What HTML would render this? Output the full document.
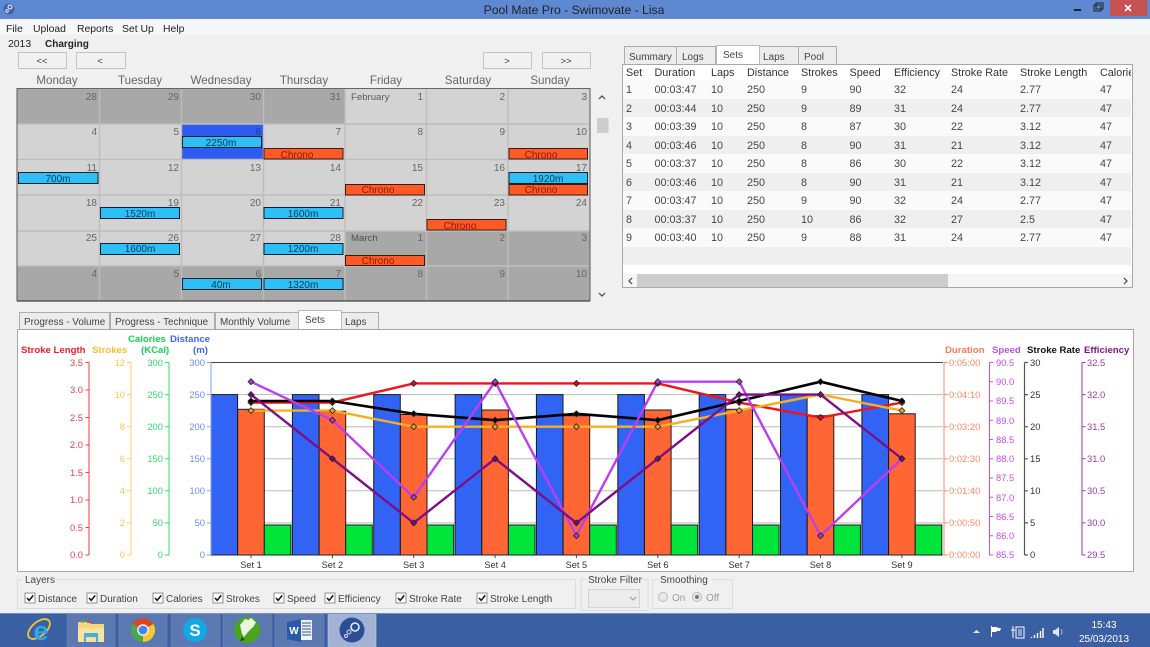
<!DOCTYPE html>
<html><head><meta charset="utf-8"><title>Pool Mate Pro</title>
<style>
html,body{margin:0;padding:0;background:#f0f0f0}
#w{position:relative;width:1150px;height:647px;overflow:hidden;background:#f0f0f0;font-family:"Liberation Sans",sans-serif;filter:blur(.35px)}
svg{position:absolute;left:0;top:0}
text{font-family:"Liberation Sans",sans-serif}
#t{position:absolute;left:623px;top:65px;width:508px;height:209px;overflow:hidden;background:#fff}
#t table{border-collapse:collapse;table-layout:fixed;width:509px;font-size:10.8px;color:#454545}
#t td,#t th{padding:2px 0 0 3px;font-weight:normal;text-align:left;white-space:nowrap;overflow:hidden;height:16.5px;line-height:16.5px}
#t th{height:13px;line-height:13px;color:#333}
#t tr:nth-child(odd) td{background:#fafafa}
#t tr:nth-child(even) td{background:#efefef}
</style></head><body><div id="w">
<svg width="1150" height="647" viewBox="0 0 1150 647">
<defs>
<polygon id="d" points="0,-3 3,0 0,3 -3,0" stroke="#222" stroke-width=".8"/>
<g id="c"><rect x="0" y="0" width="10" height="10" fill="#fff" stroke="#777" stroke-width=".8"/><path d="M2 5l2.2 2.4L8.2 2.4" fill="none" stroke="#111" stroke-width="1.5"/></g>
</defs>

<!-- title -->
<rect width="1150" height="19" fill="#5f88d3"/>
<circle cx="9" cy="9" r="5.5" fill="#3e63ab"/><circle cx="10" cy="7" r="2" fill="none" stroke="#fff" stroke-width="1"/><circle cx="7" cy="11" r="1.3" fill="none" stroke="#fff" stroke-width=".8"/>
<text x="574" y="14" font-size="12.2" fill="#222" text-anchor="middle">Pool Mate Pro - Swimovate - Lisa</text>
<rect x="1074" y="9" width="7" height="2" fill="#222"/>
<rect x="1094" y="5" width="7" height="6" fill="none" stroke="#222"/><rect x="1096" y="3" width="7" height="6" fill="none" stroke="#222"/>
<rect x="1110" y="0" width="37" height="16" fill="#c75050"/>
<path d="M1125 5l6 6M1131 5l-6 6" stroke="#fff" stroke-width="1.6"/>

<!-- menu -->
<rect y="19" width="1150" height="15" fill="#f6f7f8"/>
<g font-size="10.4" fill="#222">
<text x="6" y="32">File</text><text x="33" y="32">Upload</text><text x="77" y="32">Reports</text><text x="122" y="32">Set Up</text><text x="163" y="32">Help</text>
<text x="8" y="47">2013</text><text x="45" y="47" font-weight="bold" font-size="10">Charging</text>
</g>

<!-- nav buttons -->
<g fill="#f1f1f1" stroke="#c4c4c4">
<rect x="18.5" y="52.5" width="48" height="16"/><rect x="76.5" y="52.5" width="49" height="16"/>
<rect x="483.5" y="52.5" width="48" height="16"/><rect x="542.5" y="52.5" width="48" height="16"/>
</g>
<g font-size="9.5" fill="#333" text-anchor="middle">
<text x="42" y="64">&lt;&lt;</text><text x="100" y="64">&lt;</text><text x="507" y="64">&gt;</text><text x="566" y="64">&gt;&gt;</text>
</g>
<g font-size="11.6" fill="#666" text-anchor="middle">
<text x="57" y="84">Monday</text><text x="140" y="84">Tuesday</text><text x="221" y="84">Wednesday</text><text x="304" y="84">Thursday</text><text x="386" y="84">Friday</text><text x="468" y="84">Saturday</text><text x="550" y="84">Sunday</text>
</g>

<!-- calendar -->
<rect x="17" y="88" width="573" height="213" fill="#d3d3d3"/>
<rect x="17" y="88" width="328" height="36" fill="#a8a8a8"/>
<rect x="345" y="231" width="245" height="35" fill="#a8a8a8"/>
<rect x="17" y="266" width="573" height="35" fill="#a8a8a8"/>
<rect x="181.5" y="124" width="82" height="35.5" fill="#2e5cf2"/>
<g stroke="#bdbdbd" stroke-width="1.4">
<path d="M99.5 88V301M181.5 88V301M263.5 88V301M345 88V301M426.5 88V301M508 88V301"/>
<path d="M17 124H590M17 159.5H590M17 195H590M17 231H590M17 266H590"/>
</g>
<path d="M17 301V88.5H590V301" fill="none" stroke="#666" stroke-width="1.1"/>
<path d="M17 301H590" stroke="#444" stroke-width="1.3"/>

<g font-size="10" fill="#666" text-anchor="end">
<text x="97" y="100">28</text><text x="179" y="100">29</text><text x="261" y="100">30</text><text x="341" y="100">31</text><text x="423" y="100">1</text><text x="505" y="100">2</text><text x="587" y="100">3</text>
<text x="97" y="135">4</text><text x="179" y="135">5</text><text x="261" y="135" fill="#1d3fa8">6</text><text x="341" y="135">7</text><text x="423" y="135">8</text><text x="505" y="135">9</text><text x="587" y="135">10</text>
<text x="97" y="171">11</text><text x="179" y="171">12</text><text x="261" y="171">13</text><text x="341" y="171">14</text><text x="423" y="171">15</text><text x="505" y="171">16</text><text x="587" y="171">17</text>
<text x="97" y="206">18</text><text x="179" y="206">19</text><text x="261" y="206">20</text><text x="341" y="206">21</text><text x="423" y="206">22</text><text x="505" y="206">23</text><text x="587" y="206">24</text>
<text x="97" y="241">25</text><text x="179" y="241">26</text><text x="261" y="241">27</text><text x="341" y="241">28</text><text x="423" y="241">1</text><text x="505" y="241">2</text><text x="587" y="241">3</text>
<text x="97" y="277">4</text><text x="179" y="277">5</text><text x="261" y="277">6</text><text x="341" y="277">7</text><text x="423" y="277">8</text><text x="505" y="277">9</text><text x="587" y="277">10</text>
</g>
<text x="351" y="100" font-size="9.6" fill="#5a5a5a">February</text>
<text x="351" y="241" font-size="9.6" fill="#4f4f4f">March</text>

<g fill="#2dbff6" stroke="#10202c" stroke-width="1">
<rect x="182.5" y="136.5" width="79" height="11"/>
<rect x="18.5" y="172.5" width="79.5" height="11"/>
<rect x="509" y="172.5" width="78.5" height="11"/>
<rect x="100.5" y="207.5" width="79" height="11"/>
<rect x="264" y="207.5" width="79" height="11"/>
<rect x="100.5" y="243.5" width="79" height="11"/>
<rect x="264" y="243.5" width="79" height="11"/>
<rect x="182.5" y="278.5" width="79" height="11"/>
<rect x="264" y="278.5" width="79" height="11"/>
</g>
<g fill="#ff5a26" stroke="#3a1a10" stroke-width="1">
<rect x="264" y="148.5" width="79" height="10.5"/>
<rect x="509" y="148.5" width="78.5" height="10.5"/>
<rect x="345.5" y="184.5" width="79" height="10.5"/>
<rect x="509" y="184.5" width="78.5" height="10.5"/>
<rect x="427" y="219.5" width="79" height="10.5"/>
<rect x="345.5" y="255.5" width="79" height="10"/>
</g>
<g font-size="10" fill="#063b55" text-anchor="middle">
<text x="221" y="146">2250m</text><text x="58" y="182">700m</text><text x="548" y="182">1920m</text><text x="140" y="217">1520m</text><text x="303" y="217">1600m</text><text x="140" y="252">1600m</text><text x="303" y="252">1200m</text><text x="221" y="288">40m</text><text x="303" y="288">1320m</text>
</g>
<g font-size="10" fill="#8c1a00" text-anchor="middle">
<text x="297" y="158">Chrono</text><text x="541" y="158">Chrono</text><text x="378" y="193">Chrono</text><text x="541" y="193">Chrono</text><text x="460" y="229">Chrono</text><text x="378" y="264">Chrono</text>
</g>

<!-- cal scrollbar -->
<path d="M599 99l3-3 3 3M599 293l3 3 3-3" fill="none" stroke="#444" stroke-width="1.2"/>
<rect x="597" y="118" width="11.5" height="15" fill="#cdcdcd"/>

<!-- right tabs -->
<g fill="#ececec" stroke="#adadad">
<rect x="624.5" y="46.5" width="52" height="18"/><rect x="676.5" y="46.5" width="39" height="18"/><rect x="759.5" y="46.5" width="39" height="18"/><rect x="798.5" y="46.5" width="38" height="18"/>
</g>
<rect x="716.5" y="45.5" width="43" height="20" fill="#fff" stroke="#bbb"/>
<g font-size="10" fill="#444">
<text x="629" y="60">Summary</text><text x="682" y="60">Logs</text><text x="723" y="58">Sets</text><text x="763" y="60">Laps</text><text x="804" y="60">Pool</text>
</g>
<rect x="622.5" y="64.5" width="510" height="223" fill="#fff" stroke="#a8a8a8"/>
<rect x="623" y="274" width="509" height="13" fill="#f5f5f5"/>
<rect x="637" y="274" width="311" height="13" fill="#cdcdcd"/>
<path d="M632 278l-3 3 3 3M1124 278l3 3-3 3" fill="none" stroke="#444" stroke-width="1.2"/>

<!-- chart tabs -->
<g fill="#ececec" stroke="#adadad">
<rect x="19.5" y="312.5" width="90" height="17"/><rect x="110.5" y="312.5" width="104" height="17"/><rect x="215.5" y="312.5" width="83" height="17"/><rect x="341.5" y="312.5" width="37" height="17"/>
</g>
<rect x="298.5" y="310.5" width="43" height="19" fill="#fff" stroke="#bbb"/>
<g font-size="9.9" fill="#444">
<text x="24" y="325">Progress - Volume</text><text x="115" y="325">Progress - Technique</text><text x="220" y="325">Monthly Volume</text><text x="305" y="323">Sets</text><text x="345" y="325">Laps</text>
</g>
<rect x="17.5" y="329.5" width="1116" height="242" fill="#fff" stroke="#a6a6a6"/>

<!-- chart headers -->
<g font-size="9.6" font-weight="bold">
<text x="21" y="353" fill="#f01c28">Stroke Length</text>
<text x="92" y="353" fill="#fbbd2c">Strokes</text>
<text x="128" y="342" fill="#12d455">Calories</text>
<text x="141" y="353" fill="#12d455">(KCal)</text>
<text x="170" y="342" fill="#3f68e8">Distance</text>
<text x="193" y="353" fill="#3f68e8">(m)</text>
<text x="945" y="353" fill="#fb7a4e">Duration</text>
<text x="992" y="353" fill="#c050e8">Speed</text>
<text x="1027" y="353" fill="#111">Stroke Rate</text>
<text x="1084" y="353" fill="#85148c">Efficiency</text>
</g>

<!-- grid -->
<path d="M211 522.9H943M211 490.8H943M211 458.8H943M211 426.7H943M211 394.6H943" stroke="#bbb" stroke-width="1"/>
<path d="M211 362.5H943" stroke="#444" stroke-width="1"/>

<!-- bars -->
<g fill="#3164f4" stroke="#1b1b1b" stroke-width="1">
<rect x="211" y="394.6" width="26.6" height="160.4"/><rect x="292.4" y="394.6" width="26.6" height="160.4"/><rect x="373.7" y="394.6" width="26.6" height="160.4"/><rect x="455.1" y="394.6" width="26.6" height="160.4"/><rect x="536.4" y="394.6" width="26.6" height="160.4"/><rect x="617.8" y="394.6" width="26.6" height="160.4"/><rect x="699.2" y="394.6" width="26.6" height="160.4"/><rect x="780.5" y="394.6" width="26.6" height="160.4"/><rect x="861.9" y="394.6" width="26.6" height="160.4"/>
</g>
<g fill="#ff6633" stroke="#1b1b1b" stroke-width="1">
<rect x="237.7" y="409.3" width="26.6" height="145.7"/><rect x="319.1" y="411.3" width="26.6" height="143.7"/><rect x="400.4" y="414.5" width="26.6" height="140.5"/><rect x="481.8" y="410" width="26.6" height="145"/><rect x="563.1" y="415.7" width="26.6" height="139.3"/><rect x="644.5" y="410" width="26.6" height="145"/><rect x="725.9" y="409.3" width="26.6" height="145.7"/><rect x="807.2" y="415.7" width="26.6" height="139.3"/><rect x="888.6" y="413.8" width="26.6" height="141.2"/>
</g>
<g fill="#00e53a" stroke="#1b1b1b" stroke-width="1">
<rect x="264.3" y="525" width="26.6" height="30"/><rect x="345.7" y="525" width="26.6" height="30"/><rect x="427" y="525" width="26.6" height="30"/><rect x="508.4" y="525" width="26.6" height="30"/><rect x="589.7" y="525" width="26.6" height="30"/><rect x="671.1" y="525" width="26.6" height="30"/><rect x="752.5" y="525" width="26.6" height="30"/><rect x="833.8" y="525" width="26.6" height="30"/><rect x="915.2" y="525" width="26.6" height="30"/>
</g>
<path d="M211 555H943" stroke="#222" stroke-width="1"/>

<!-- lines -->
<g fill="none" stroke-linejoin="round" stroke-width="2.4">
<polyline stroke="#f0141e" points="251,402.6 332.4,402.6 413.7,383.4 495.1,383.4 576.4,383.4 657.8,383.4 739.2,402.6 820.5,417.5 901.9,402.6"/>
<polyline stroke="#f5b01e" points="251,410.6 332.4,410.6 413.7,426.7 495.1,426.7 576.4,426.7 657.8,426.7 739.2,410.6 820.5,394.6 901.9,410.6"/>
<polyline stroke="#000" stroke-width="2.6" points="251,401 332.4,401 413.7,413.8 495.1,420.2 576.4,413.8 657.8,420.2 739.2,401 820.5,381.7 901.9,401"/>
<polyline stroke="#bb3ef0" points="251,381.7 332.4,420.2 413.7,497.2 495.1,381.7 576.4,535.7 657.8,381.7 739.2,381.7 820.5,535.7 901.9,458.7"/>
<polyline stroke="#7d0f86" points="251,394.6 332.4,458.7 413.7,522.9 495.1,458.7 576.4,522.9 657.8,458.7 739.2,394.6 820.5,394.6 901.9,458.7"/>
</g>
<g fill="#c81420">
<use href="#d" x="251" y="402.6"/><use href="#d" x="332.4" y="402.6"/><use href="#d" x="413.7" y="383.4"/><use href="#d" x="495.1" y="383.4"/><use href="#d" x="576.4" y="383.4"/><use href="#d" x="657.8" y="383.4"/><use href="#d" x="739.2" y="402.6"/><use href="#d" x="820.5" y="417.5"/><use href="#d" x="901.9" y="402.6"/>
</g>
<g fill="#e0a51e">
<use href="#d" x="251" y="410.6"/><use href="#d" x="332.4" y="410.6"/><use href="#d" x="413.7" y="426.7"/><use href="#d" x="495.1" y="426.7"/><use href="#d" x="576.4" y="426.7"/><use href="#d" x="657.8" y="426.7"/><use href="#d" x="739.2" y="410.6"/><use href="#d" x="820.5" y="394.6"/><use href="#d" x="901.9" y="410.6"/>
</g>
<g fill="#000">
<use href="#d" x="251" y="401"/><use href="#d" x="332.4" y="401"/><use href="#d" x="413.7" y="413.8"/><use href="#d" x="495.1" y="420.2"/><use href="#d" x="576.4" y="413.8"/><use href="#d" x="657.8" y="420.2"/><use href="#d" x="739.2" y="401"/><use href="#d" x="820.5" y="381.7"/><use href="#d" x="901.9" y="401"/>
</g>
<g fill="#a83ed0">
<use href="#d" x="251" y="381.7"/><use href="#d" x="332.4" y="420.2"/><use href="#d" x="413.7" y="497.2"/><use href="#d" x="495.1" y="381.7"/><use href="#d" x="576.4" y="535.7"/><use href="#d" x="657.8" y="381.7"/><use href="#d" x="739.2" y="381.7"/><use href="#d" x="820.5" y="535.7"/><use href="#d" x="901.9" y="458.7"/>
</g>
<g fill="#720c7c">
<use href="#d" x="251" y="394.6"/><use href="#d" x="332.4" y="458.7"/><use href="#d" x="413.7" y="522.9"/><use href="#d" x="495.1" y="458.7"/><use href="#d" x="576.4" y="522.9"/><use href="#d" x="657.8" y="458.7"/><use href="#d" x="739.2" y="394.6"/><use href="#d" x="820.5" y="394.6"/><use href="#d" x="901.9" y="458.7"/>
</g>

<!-- x labels -->
<path d="M251 555v3M332.4 555v3M413.7 555v3M495.1 555v3M576.4 555v3M657.8 555v3M739.2 555v3M820.5 555v3M901.9 555v3" stroke="#444"/>
<g font-size="9.2" fill="#333" text-anchor="middle">
<text x="251" y="568">Set 1</text><text x="332.4" y="568">Set 2</text><text x="413.7" y="568">Set 3</text><text x="495.1" y="568">Set 4</text><text x="576.4" y="568">Set 5</text><text x="657.8" y="568">Set 6</text><text x="739.2" y="568">Set 7</text><text x="820.5" y="568">Set 8</text><text x="901.9" y="568">Set 9</text>
</g>

<!-- axes left -->
<g fill="none" stroke-width="1">
<path stroke="#f03c46" d="M89 362.5V555M85.5 362.5H89M85.5 390H89M85.5 417.5H89M85.5 445H89M85.5 472.5H89M85.5 500H89M85.5 527.5H89M85.5 555H89"/>
<path stroke="#fbcf60" d="M131 362.5V555M127 362.5H131M127 394.6H131M127 426.7H131M127 458.8H131M127 490.8H131M127 522.9H131M127 555H131"/>
<path stroke="#30dc68" d="M169 362.5V555M165 362.5H169M165 394.6H169M165 426.7H169M165 458.8H169M165 490.8H169M165 522.9H169M165 555H169"/>
<path stroke="#7f9ff5" d="M211 362.5V555M207 362.5H211M207 394.6H211M207 426.7H211M207 458.8H211M207 490.8H211M207 522.9H211M207 555H211"/>
<path stroke="#fb8a60" d="M944 362.5V555M944 362.5H948M944 394.6H948M944 426.7H948M944 458.8H948M944 490.8H948M944 522.9H948M944 555H948"/>
<path stroke="#c050e8" d="M989.5 362.5V555M989.5 362.5H993M989.5 381.8H993M989.5 401H993M989.5 420.2H993M989.5 439.5H993M989.5 458.8H993M989.5 478H993M989.5 497.2H993M989.5 516.5H993M989.5 535.8H993M989.5 555H993"/>
<path stroke="#555" stroke-width="1.2" d="M1024.5 362.5V555M1024.5 362.5H1028M1024.5 394.6H1028M1024.5 426.7H1028M1024.5 458.8H1028M1024.5 490.8H1028M1024.5 522.9H1028M1024.5 555H1028"/>
<path stroke="#9a3aa0" d="M1082 362.5V555M1082 362.5H1085.5M1082 394.6H1085.5M1082 426.7H1085.5M1082 458.8H1085.5M1082 490.8H1085.5M1082 522.9H1085.5M1082 555H1085.5"/>
</g>
<g font-size="9.4" text-anchor="end">
<g fill="#f03c46"><text x="83" y="366">3.5</text><text x="83" y="393">3.0</text><text x="83" y="421">2.5</text><text x="83" y="448">2.0</text><text x="83" y="476">1.5</text><text x="83" y="503">1.0</text><text x="83" y="531">0.5</text><text x="83" y="558">0.0</text></g>
<g fill="#fbc64a"><text x="125" y="366">12</text><text x="125" y="398">10</text><text x="125" y="430">8</text><text x="125" y="462">6</text><text x="125" y="494">4</text><text x="125" y="526">2</text><text x="125" y="558">0</text></g>
<g fill="#30dc68"><text x="163" y="366">300</text><text x="163" y="398">250</text><text x="163" y="430">200</text><text x="163" y="462">150</text><text x="163" y="494">100</text><text x="163" y="526">50</text><text x="163" y="558">0</text></g>
<g fill="#6a8cf0"><text x="205" y="366">300</text><text x="205" y="398">250</text><text x="205" y="430">200</text><text x="205" y="462">150</text><text x="205" y="494">100</text><text x="205" y="526">50</text><text x="205" y="558">0</text></g>
</g>
<g font-size="9.4">
<g fill="#fb8a60"><text x="949" y="366">0:05:00</text><text x="949" y="398">0:04:10</text><text x="949" y="430">0:03:20</text><text x="949" y="462">0:02:30</text><text x="949" y="494">0:01:40</text><text x="949" y="526">0:00:50</text><text x="949" y="558">0:00:00</text></g>
<g fill="#c050e8"><text x="996" y="366">90.5</text><text x="996" y="385">90.0</text><text x="996" y="404">89.5</text><text x="996" y="424">89.0</text><text x="996" y="443">88.5</text><text x="996" y="462">88.0</text><text x="996" y="481">87.5</text><text x="996" y="501">87.0</text><text x="996" y="520">86.5</text><text x="996" y="539">86.0</text><text x="996" y="558">85.5</text></g>
<g fill="#333"><text x="1030" y="366">30</text><text x="1030" y="398">25</text><text x="1030" y="430">20</text><text x="1030" y="462">15</text><text x="1030" y="494">10</text><text x="1030" y="526">5</text><text x="1030" y="558">0</text></g>
<g fill="#9a3aa0"><text x="1087" y="366">32.5</text><text x="1087" y="398">32.0</text><text x="1087" y="430">31.5</text><text x="1087" y="462">31.0</text><text x="1087" y="494">30.5</text><text x="1087" y="526">30.0</text><text x="1087" y="558">29.5</text></g>
</g>

<!-- layers -->
<g fill="none" stroke="#dcdcdc">
<rect x="17.5" y="579.5" width="558" height="29"/><rect x="581" y="579.5" width="67" height="31"/><rect x="652.5" y="579.5" width="80" height="29"/>
</g>
<rect x="22" y="574" width="33" height="11" fill="#f0f0f0"/><rect x="586" y="574" width="56" height="11" fill="#f0f0f0"/><rect x="658" y="574" width="54" height="11" fill="#f0f0f0"/>
<g font-size="10" fill="#444">
<text x="25" y="583">Layers</text><text x="588" y="583">Stroke Filter</text><text x="660" y="583">Smoothing</text>
<text x="38" y="602">Distance</text><text x="100" y="602">Duration</text><text x="166" y="602">Calories</text><text x="226" y="602">Strokes</text><text x="287" y="602">Speed</text><text x="338" y="602">Efficiency</text><text x="409" y="602">Stroke Rate</text><text x="490" y="602">Stroke Length</text>
</g>
<use href="#c" x="25" y="593"/><use href="#c" x="87" y="593"/><use href="#c" x="153" y="593"/><use href="#c" x="213" y="593"/><use href="#c" x="274" y="593"/><use href="#c" x="325" y="593"/><use href="#c" x="396" y="593"/><use href="#c" x="477" y="593"/>
<rect x="588.5" y="589.5" width="51" height="18" fill="#ececec" stroke="#d4d4d4"/>
<path d="M630 597l3 3 3-3" fill="none" stroke="#999"/>
<circle cx="663" cy="597" r="4.5" fill="#e8e8e8" stroke="#bbb"/>
<circle cx="697" cy="597" r="4.5" fill="#e8e8e8" stroke="#bbb"/><circle cx="697" cy="597" r="2" fill="#777"/>
<g font-size="10" fill="#9a9a9a"><text x="672" y="601">On</text><text x="706" y="601">Off</text></g>

<!-- taskbar -->
<rect y="613" width="1150" height="34" fill="#3a5fa3"/>
<rect y="613" width="1150" height="1" fill="#6f8fc8"/>
<g fill="#5b78b0" stroke="#7088b8" stroke-width=".6">
<rect x="67" y="614.5" width="48" height="32"/><rect x="119" y="614.5" width="48" height="32"/><rect x="171" y="614.5" width="49" height="32"/><rect x="223" y="614.5" width="49" height="32"/><rect x="275" y="614.5" width="49" height="32"/>
</g>
<rect x="328" y="614.5" width="48" height="32" fill="#a3b2d2" stroke="#c5d0e5" stroke-width=".6"/>

<!-- IE -->
<ellipse cx="39" cy="629" rx="13" ry="7" fill="none" stroke="#f2c531" stroke-width="1.8" transform="rotate(-40 39 629)"/>
<text x="41" y="640" font-size="27" font-weight="bold" fill="#2ca9e8" text-anchor="middle">e</text>
<!-- folder -->
<path d="M78 622h11l2 2h13v6H78z" fill="#f5d77e"/>
<rect x="81" y="620.5" width="4" height="2" fill="#57a846"/><rect x="87" y="621" width="4" height="2" fill="#d9483b"/>
<rect x="78" y="628" width="26" height="14" fill="#f8e3a2"/>
<path d="M85 642v-6h12v6" fill="none" stroke="#4faed8" stroke-width="2.2"/>
<rect x="84" y="633" width="14" height="2" fill="#4faed8"/>
<!-- chrome -->
<circle cx="143" cy="630" r="12" fill="#4ca64a"/>
<path d="M143 630L132.6 624A12 12 0 0 1 153.4 624Z" fill="#d9442e"/>
<path d="M143 630L153.4 624A12 12 0 0 1 143 642Z" fill="#f3c830"/>
<circle cx="143" cy="630" r="5.8" fill="#eef2fa"/><circle cx="143" cy="630" r="4.4" fill="#4a84dc"/>
<!-- skype -->
<circle cx="195" cy="630" r="12" fill="#10a8e6"/>
<text x="195" y="636" font-size="17" font-weight="bold" fill="#fff" text-anchor="middle">S</text>
<!-- corel -->
<circle cx="247" cy="630" r="13" fill="#4aa51e"/>
<path d="M240 625l5-6 4 1 1-2 3 1 1 2 2 1-2 4-6 6-4 5-2-3z" fill="#eaf7dc"/>
<path d="M242 637l3 3-5 1z" fill="#164d08"/>
<!-- word -->
<rect x="300" y="620" width="12" height="20" fill="#f2f2f2"/>
<path d="M302 623h9M302 626h9M302 629h9M302 632h9M302 635h9" stroke="#2a5597" stroke-width="1"/>
<path d="M287 622l14-3v23l-14-3z" fill="#2a5aa7"/>
<text x="294" y="634" font-size="10" font-weight="bold" fill="#fff" text-anchor="middle">W</text>
<!-- poolmate -->
<circle cx="352" cy="630" r="12.5" fill="#2c4e96"/>
<circle cx="355" cy="627" r="4" fill="none" stroke="#e6edf8" stroke-width="1.6"/>
<circle cx="349" cy="632" r="2" fill="none" stroke="#cfdaf0" stroke-width="1"/>
<circle cx="346" cy="636" r="1.5" fill="none" stroke="#cfdaf0" stroke-width="1"/>

<!-- tray -->
<path d="M973 633l3.5-3 3.5 3z" fill="#e8edf6"/>
<path d="M991.5 626v11" stroke="#fff"/><path d="M992 627h5l1 1 3 0-1 3-3 0-1 1h-4z" fill="#fff"/>
<rect x="1016" y="627" width="8" height="11" fill="none" stroke="#fff"/><rect x="1018" y="629" width="4" height="7" fill="#8aa3d0"/>
<path d="M1013 626v12M1011 630h4" stroke="#fff"/>
<path d="M1031.5 638v-1M1034.5 638v-3M1037.5 638v-5M1040.5 638v-7M1043 638v-10" stroke="#fff" stroke-width="1.4"/>
<path d="M1053 630h2l4-3v10l-4-3h-2z" fill="#dfe6f3"/>
<path d="M1061 629q2 3 0 6" fill="none" stroke="#9db1d6"/>
<g font-size="10" fill="#fff" text-anchor="middle">
<text x="1104" y="628">15:43</text><text x="1104" y="642">25/03/2013</text>
</g>
</svg>

<div id="t"><table>
<colgroup><col style="width:28.5px"><col style="width:56.5px"><col style="width:36px"><col style="width:54px"><col style="width:48.5px"><col style="width:44.5px"><col style="width:57px"><col style="width:69px"><col style="width:80px"><col style="width:35px"></colgroup>
<thead><tr><th>Set</th><th>Duration</th><th>Laps</th><th>Distance</th><th>Strokes</th><th>Speed</th><th>Efficiency</th><th>Stroke Rate</th><th>Stroke Length</th><th>Calories</th></tr></thead>
<tbody>
<tr><td>1</td><td>00:03:47</td><td>10</td><td>250</td><td>9</td><td>90</td><td>32</td><td>24</td><td>2.77</td><td>47</td></tr>
<tr><td>2</td><td>00:03:44</td><td>10</td><td>250</td><td>9</td><td>89</td><td>31</td><td>24</td><td>2.77</td><td>47</td></tr>
<tr><td>3</td><td>00:03:39</td><td>10</td><td>250</td><td>8</td><td>87</td><td>30</td><td>22</td><td>3.12</td><td>47</td></tr>
<tr><td>4</td><td>00:03:46</td><td>10</td><td>250</td><td>8</td><td>90</td><td>31</td><td>21</td><td>3.12</td><td>47</td></tr>
<tr><td>5</td><td>00:03:37</td><td>10</td><td>250</td><td>8</td><td>86</td><td>30</td><td>22</td><td>3.12</td><td>47</td></tr>
<tr><td>6</td><td>00:03:46</td><td>10</td><td>250</td><td>8</td><td>90</td><td>31</td><td>21</td><td>3.12</td><td>47</td></tr>
<tr><td>7</td><td>00:03:47</td><td>10</td><td>250</td><td>9</td><td>90</td><td>32</td><td>24</td><td>2.77</td><td>47</td></tr>
<tr><td>8</td><td>00:03:37</td><td>10</td><td>250</td><td>10</td><td>86</td><td>32</td><td>27</td><td>2.5</td><td>47</td></tr>
<tr><td>9</td><td>00:03:40</td><td>10</td><td>250</td><td>9</td><td>88</td><td>31</td><td>24</td><td>2.77</td><td>47</td></tr>
<tr><td colspan="10">&nbsp;</td></tr>
</tbody></table></div>
</div></body></html>
